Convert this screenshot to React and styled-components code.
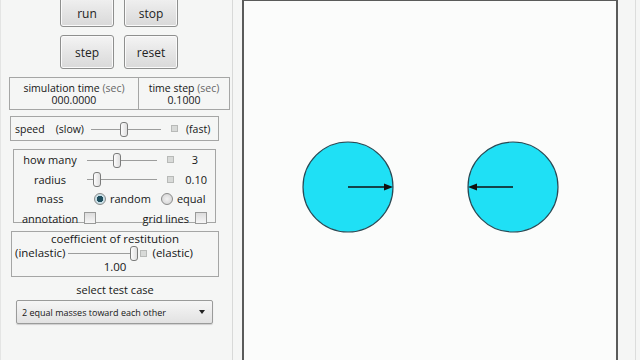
import React from 'react';
import styled, { createGlobalStyle } from 'styled-components';

const GlobalStyle = createGlobalStyle`
  html, body { margin: 0; padding: 0; background: #f5f6f5; overflow: hidden; }
  body { font-family: "Open Sans", "Liberation Sans", sans-serif; color: #161616; }
`;

const Page = styled.div`
  display: flex;
  width: 640px;
  height: 360px;
  overflow: hidden;
  background: #f5f6f5;
`;

const Panel = styled.div`
  width: 233px;
  border-right: 1px solid #d8d9d8;
  border-left: 1px solid #e4e5e4;
  display: flex;
  flex-direction: column;
  align-items: flex-start;
  font-size: 10.5px;
  box-sizing: border-box;
`;

const ButtonGrid = styled.div`
  display: grid;
  grid-template-columns: 54px 54px;
  column-gap: 10px;
  row-gap: 8px;
  margin: -7px 0 0 59px;
`;

const Button = styled.button`
  height: 34px;
  border: 1px solid #8e8f8e;
  border-radius: 3px;
  background: linear-gradient(#f4f4f4, #e6e6e6 50%, #d9d9d9);
  font-family: inherit;
  font-size: 12px;
  color: #222;
  padding: 0;
  box-shadow: inset 0 0 0 1px #fafafa;
  &:first-child, &:nth-child(2) { padding-top: 6px; }
`;

const Box = styled.div`
  box-sizing: border-box;
  border: 1px solid #a5a6a5;
  margin-left: ${p => p.$left}px;
  width: ${p => p.$width}px;
  margin-top: ${p => p.$top}px;
`;

const TimeBox = styled(Box)`
  display: grid;
  grid-template-columns: 128px 1fr;
  height: 33px;
  & > div + div { border-left: 1px solid #a5a6a5; }
`;

const TimeCell = styled.div`
  display: flex;
  flex-direction: column;
  align-items: center;
  justify-content: center;
  line-height: 12px;
`;

const Sec = styled.span`
  color: #666;
`;

const SpeedBox = styled(Box)`
  height: 25px;
  display: flex;
  align-items: center;
  padding: 0 4px;
`;

const SliderWrap = styled.div`
  position: relative;
  width: ${p => p.$w}px;
  height: 14px;
  margin: 0 ${p => p.$mx || 0}px;
  flex: none;
  &::before {
    content: '';
    position: absolute;
    left: 0; right: 0; top: 7px;
    border-top: 1px solid #9c9d9c;
  }
`;

const Thumb = styled.div`
  position: absolute;
  top: 0;
  width: 6px;
  height: 13px;
  border: 1px solid #7b7c7b;
  border-radius: 3px;
  background: linear-gradient(90deg, #fdfdfd, #dedede);
  transform: translateX(-4px);
`;

const Tick = styled.span`
  display: inline-block;
  width: 5px;
  height: 5px;
  border: 1px solid #b8bab8;
  background: #d8dad8;
  flex: none;
  margin: 0 ${p => p.$mx || 0}px;
`;

const Slider = ({ w, pos, mx }) => (
  <SliderWrap $w={w} $mx={mx}>
    <Thumb style={{ left: pos }} />
  </SliderWrap>
);

const SettingsBox = styled(Box)`
  display: grid;
  grid-template-columns: 70px 1fr;
  grid-auto-rows: 19.5px;
  align-items: center;
  padding: 0 8px 0 1px;
  height: 74px;
`;

const Label = styled.span`
  text-align: center;
  font-size: 11px;
`;

const RowRight = styled.div`
  display: flex;
  align-items: center;
  font-size: 11px;
`;

const Value = styled.span`
  margin-left: auto;
  margin-right: ${p => p.$mr || 0}px;
`;

const Radio = styled.span`
  width: 12px;
  height: 12px;
  border-radius: 50%;
  border: 1px solid #8a8b8a;
  box-sizing: border-box;
  background: ${p => p.$on
    ? 'radial-gradient(circle, #1f4f5e 0 3px, #c9dfe6 3.5px)'
    : 'radial-gradient(circle, #f2f2f2, #cfcfcf)'};
  margin-right: 4px;
  flex: none;
`;

const Check = styled.span`
  width: 12px;
  height: 12px;
  box-sizing: border-box;
  border: 1px solid #999a99;
  background: linear-gradient(#dcdcdc, #f6f6f6);
  flex: none;
`;

const AnnRow = styled.div`
  grid-column: 1 / 3;
  display: flex;
  align-items: center;
  padding-left: 7px;
  gap: 6px;
  font-size: 11px;
`;

const CoefBox = styled(Box)`
  height: 46px;
  display: flex;
  flex-direction: column;
  align-items: center;
  line-height: 14px;
  font-size: 11.5px;
`;

const CoefRow = styled.div`
  display: flex;
  align-items: center;
  width: 100%;
  padding-left: 3px;
  box-sizing: border-box;
`;

const Caption = styled.div`
  width: 228px;
  text-align: center;
  margin-top: 5px;
  font-size: 11px;
  line-height: 15px;
`;

const Select = styled.div`
  margin: 3px 0 0 15px;
  width: 197px;
  height: 24px;
  box-sizing: border-box;
  border: 1px solid #9a9b9a;
  border-radius: 2px;
  background: linear-gradient(#f6f6f6, #e2e2e2);
  display: flex;
  align-items: center;
  padding: 0 7px 0 5px;
  font-size: 9px;
  box-shadow: 0 1px 1px #cfcfcf;
`;

const Arrow = styled.span`
  margin-left: auto;
  width: 0;
  height: 0;
  border-left: 3.5px solid transparent;
  border-right: 3.5px solid transparent;
  border-top: 4px solid #222;
`;

const Stage = styled.div`
  flex: 1;
  display: flex;
  padding-left: 9px;
`;

const Canvas = styled.div`
  width: 376px;
  height: 380px;
  box-sizing: border-box;
  border: 2px solid #5a5b5a;
  background: #fbfcfb;
  margin-top: -1px;
`;

const RightStrip = styled.div`
  width: 17px;
  border-right: 1px solid #dcdddc;
`;

const Ball = ({ cx, dir }) => (
  <g>
    <circle cx={cx} cy={186} r={45} fill="#1fe0f5" stroke="#2a4a55" strokeWidth="1.2" />
    <line x1={cx} y1={186} x2={cx + dir * 38} y2={186} stroke="#111" strokeWidth="1.3" />
    <polygon
      points={`${cx + dir * 45},186 ${cx + dir * 36},182.5 ${cx + dir * 36},189.5`}
      fill="#111"
    />
  </g>
);

export default function App() {
  return (
    <Page>
      <GlobalStyle />
      <Panel>
        <ButtonGrid>
          <Button>run</Button>
          <Button>stop</Button>
          <Button>step</Button>
          <Button>reset</Button>
        </ButtonGrid>
        <TimeBox $left={8} $width={221} $top={8}>
          <TimeCell>
            <span>simulation time <Sec>(sec)</Sec></span>
            <span>000.0000</span>
          </TimeCell>
          <TimeCell>
            <span>time step <Sec>(sec)</Sec></span>
            <span>0.1000</span>
          </TimeCell>
        </TimeBox>
        <SpeedBox $left={9} $width={209} $top={6}>
          <span>speed</span>
          <span style={{ marginLeft: 11 }}>(slow)</span>
          <Slider w={70} pos={33} mx={7} />
          <Tick $mx={3} />
          <span style={{ marginLeft: 5 }}>(fast)</span>
        </SpeedBox>
        <SettingsBox $left={12} $width={203} $top={8}>
          <Label>how many</Label>
          <RowRight>
            <Slider w={70} pos={30} mx={2} />
            <Tick $mx={8} />
            <Value $mr={9}>3</Value>
          </RowRight>
          <Label>radius</Label>
          <RowRight>
            <Slider w={70} pos={10} mx={2} />
            <Tick $mx={8} />
            <Value>0.10</Value>
          </RowRight>
          <Label>mass</Label>
          <RowRight>
            <Radio $on style={{ marginLeft: 9 }} />
            <span>random</span>
            <Radio style={{ marginLeft: 10 }} />
            <span>equal</span>
          </RowRight>
          <AnnRow>
            <span>annotation</span>
            <Check />
            <span style={{ marginLeft: 'auto' }}>grid lines</span>
            <Check />
          </AnnRow>
        </SettingsBox>
        <CoefBox $left={10} $width={208} $top={8}>
          <span>coefficient of restitution</span>
          <CoefRow>
            <span>(inelastic)</span>
            <Slider w={64} pos={66} mx={3} />
            <Tick $mx={5} />
            <span>(elastic)</span>
          </CoefRow>
          <span>1.00</span>
        </CoefBox>
        <Caption>select test case</Caption>
        <Select>
          <span>2 equal masses toward each other</span>
          <Arrow />
        </Select>
      </Panel>
      <Stage>
        <Canvas>
          <svg width="372" height="376" viewBox="0 0 372 376">
            <Ball cx={104} dir={1} />
            <Ball cx={269} dir={-1} />
          </svg>
        </Canvas>
        <RightStrip />
      </Stage>
    </Page>
  );
}
